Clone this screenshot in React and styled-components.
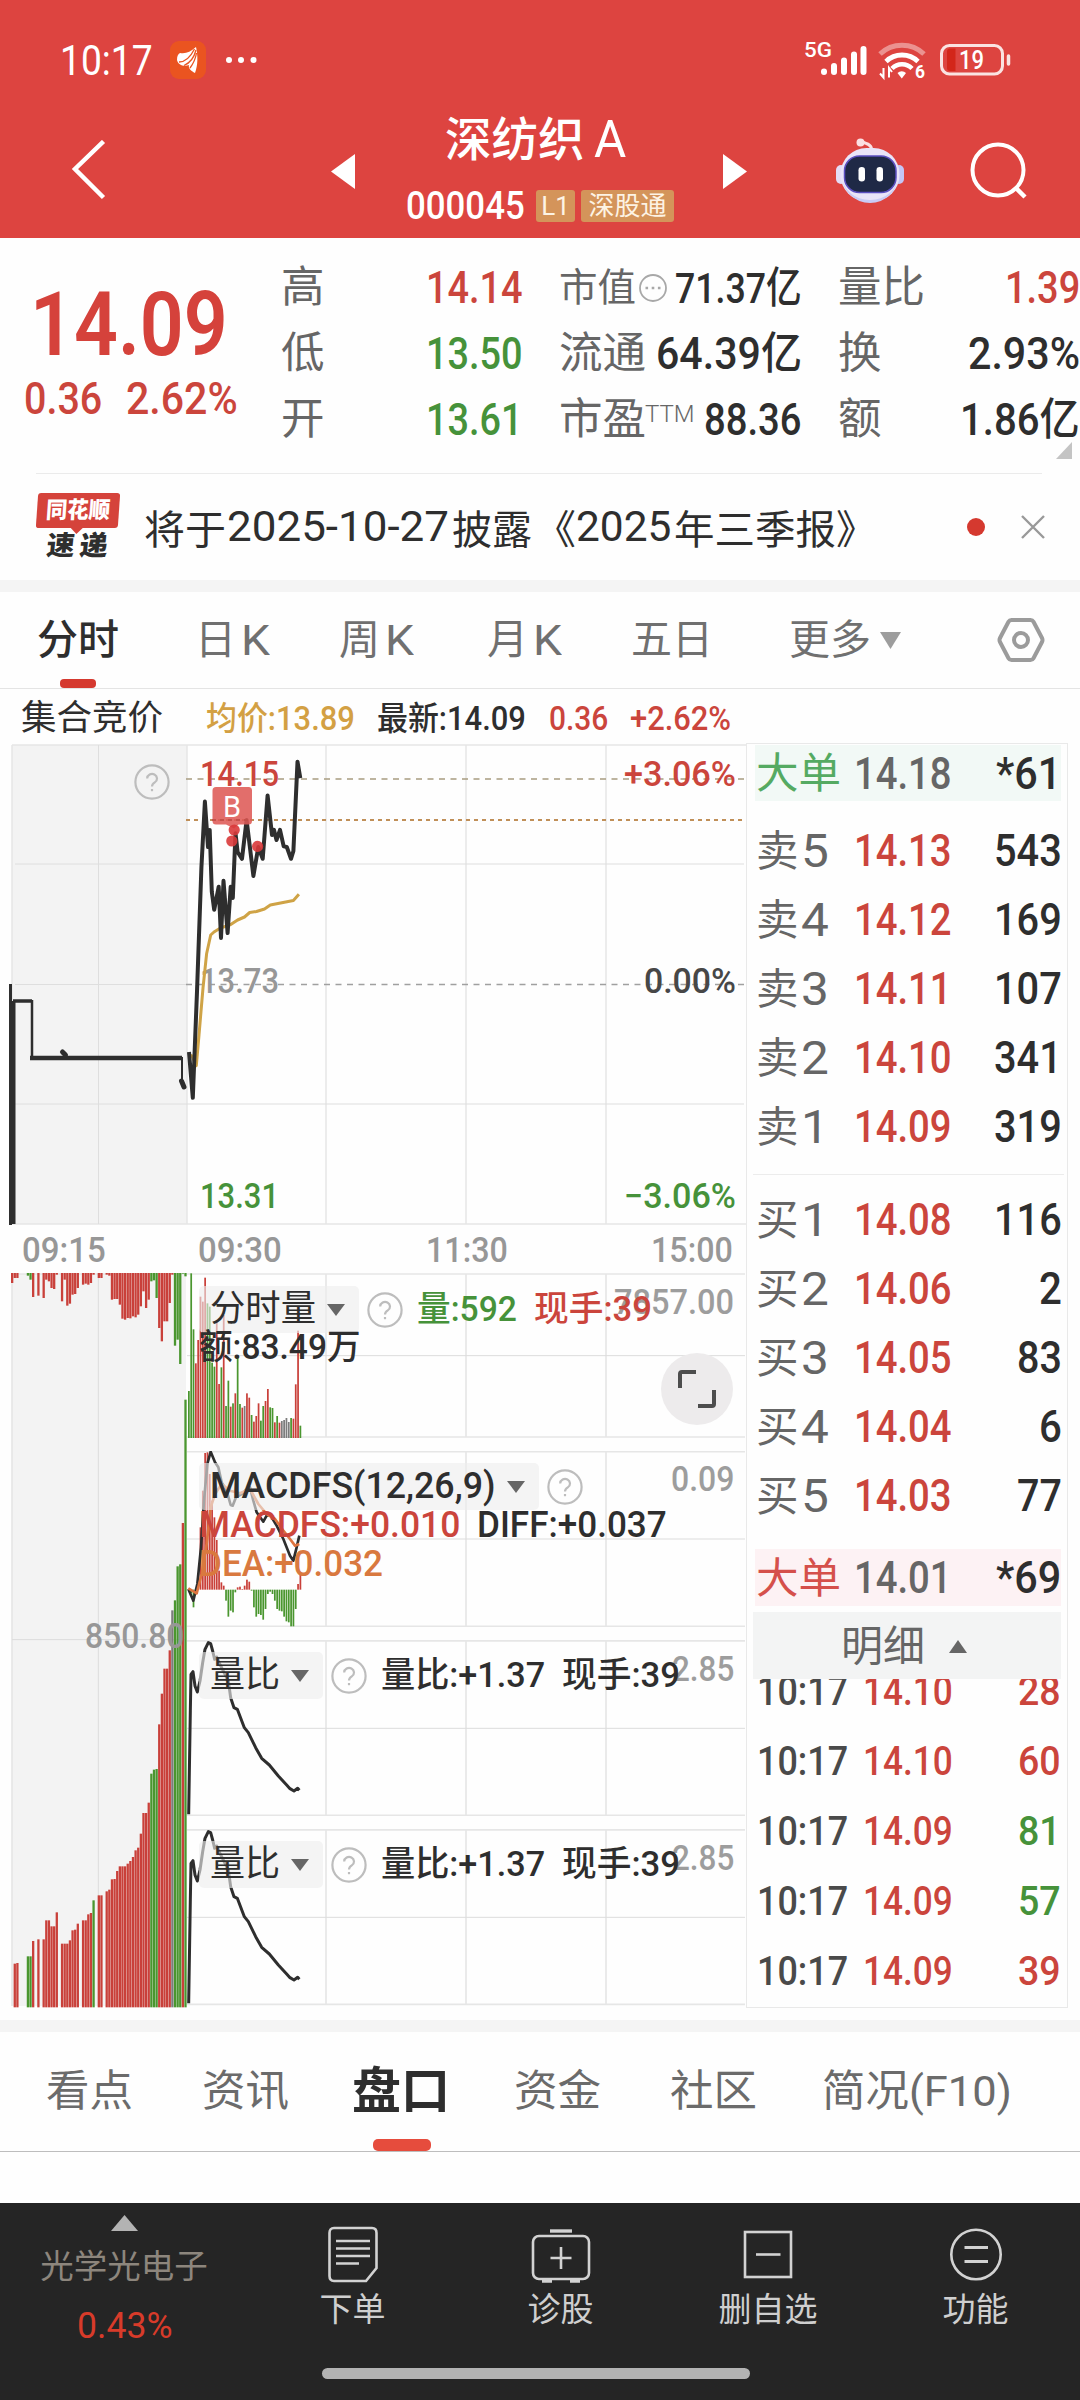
import React, { useLayoutEffect, useRef, useState } from 'react'
import styled, { createGlobalStyle } from 'styled-components'

const RED = '#cb453c'
const GREEN = '#46923a'
const INK = '#2e2e2e'
const GREY = '#666'
const LINE = '#e6e6e6'

const GlobalStyle = createGlobalStyle`
    body {
        margin: 0;
        background: #fefefe;
        font-family: Roboto, "Noto Sans CJK SC", sans-serif;
        color: ${INK};
    }
    * {
        box-sizing: border-box;
    }
    svg {
        display: block;
    }
`

const FitBox = styled.span`
    display: inline-block;
    flex: none;
    width: ${p => p.$w}px;
    font-size: ${p => p.$size}px;
    font-weight: ${p => p.$weight || 400};
    color: ${p => p.$color || 'inherit'};
    white-space: nowrap;
`
const FitInner = styled.span`
    display: inline-block;
    transform-origin: 0 50%;
`

// text squeezed horizontally to a fixed width, like the narrow DIN digits
const Fit = ({ w, size, weight, color, children }) => {
    const ref = useRef(null)
    const [k, setK] = useState(1)
    useLayoutEffect(() => {
        setK(w / ref.current.offsetWidth)
    }, [w, size, weight, children])
    return (
        <FitBox $w={w} $size={size} $weight={weight} $color={color}>
            <FitInner ref={ref} style={{ transform: `scaleX(${k})` }}>{children}</FitInner>
        </FitBox>
    )
}

const Page = styled.div`
    width: 1080px;
    height: 2400px;
    display: flex;
    flex-direction: column;
    overflow: hidden;
`

/* ---------- header ---------- */
const Header = styled.header`
    height: 238px;
    background: #dd4440;
    color: #fff;
    flex: none;
`
const StatusBar = styled.div`
    height: 104px;
    padding: 16px 69px 0 60px;
    display: flex;
    align-items: center;
`
const StatusIcons = styled.div`
    margin-left: auto;
    display: flex;
    align-items: center;
`
const NoticeIcon = styled.div`
    margin: 0 18px 0 17px;
`
const TitleBar = styled.div`
    height: 134px;
    display: flex;
    align-items: center;
`
const IconSlot = styled.div`
    margin-left: ${p => p.$gap}px;
    flex: none;
`
const TitleBlock = styled.div`
    width: 268px;
    height: 134px;
    margin-left: 51px;
    padding-top: 7px;
`
const StockName = styled.div`
    height: 58px;
    line-height: 58px;
    font-size: 46.5px;
    font-weight: 500;
    margin: 0 0 18px 39px;
    display: flex;
    gap: 9px;
`
const CodeRow = styled.div`
    height: 38px;
    line-height: 38px;
    display: flex;
    align-items: center;
`
const Badge = styled.span`
    height: 32px;
    line-height: 33px;
    width: ${p => p.$w}px;
    margin-left: ${p => p.$gap}px;
    border-radius: 3px;
    background: #d4945a;
    color: #fdf3e4;
    font-size: 26px;
    text-align: center;
`

/* ---------- quote ---------- */
const Quote = styled.section`
    position: relative;
    height: 235px;
    padding-top: 17px;
    display: grid;
    grid-template-columns: 281px 240px 240px 241px;
    column-gap: 0;
    flex: none;
`
const PriceCol = styled.div`
    padding: 20px 0 0 24px;
`
const BigPrice = styled.div`
    height: 100px;
    line-height: 100px;
    padding-left: 6px;
`
const Change = styled.div`
    height: 48px;
    line-height: 48px;
    display: flex;
    gap: 24px;
`
const StatCol = styled.div`
    margin-left: ${p => p.$gap || 0}px;
    width: ${p => p.$w}px;
`
const StatRow = styled.div`
    height: 66px;
    line-height: 66px;
    display: flex;
    justify-content: space-between;
    align-items: center;
    white-space: nowrap;
`
const StatLabel = styled.span`
    font-size: ${p => p.$size || 43}px;
    color: ${GREY};
    display: flex;
    align-items: center;
    gap: 2px;
`
const Sup = styled.span`
    font-size: 24px;
    font-weight: 300;
    line-height: 30px;
    margin: -12px 0 0 -3px;
`
const Corner = styled.svg`
    position: absolute;
    left: 1056px;
    top: 204px;
`
const Divider = styled.div`
    height: 1px;
    margin: 0 38px 0 36px;
    background: #ebebeb;
    flex: none;
`

/* ---------- news ---------- */
const News = styled.section`
    height: 106px;
    display: flex;
    align-items: center;
    flex: none;
`
const NewsTag = styled.div`
    width: 82px;
    height: 68px;
    margin-left: 37px;
    font-weight: 900;
`
const TagTop = styled.div`
    position: relative;
    height: 35px;
    line-height: 36px;
    padding-left: 9px;
    color: #fff;
    background: #d5433b;
    border-radius: 3px;
    transform: skewX(-4deg);
    &::after {
        content: '';
        position: absolute;
        left: 35px;
        top: 35px;
        border: 6px solid transparent;
        border-top-color: #d5433b;
        border-bottom-width: 0;
    }
`
const TagBottom = styled.div`
    height: 31px;
    line-height: 37px;
    padding-left: 10px;
    display: flex;
    gap: 5px;
    transform: skewX(-6deg);
`
const NewsText = styled.div`
    width: 728px;
    margin-left: 25px;
    padding-bottom: 1px;
    display: flex;
    align-items: center;
    font-size: 40px;
    white-space: nowrap;
`
const Dot = styled.div`
    width: 18px;
    height: 18px;
    margin: 0 35px 0 95px;
    border-radius: 50%;
    background: #d5392f;
`
const Band = styled.div`
    height: 12px;
    background: #f4f4f4;
    flex: none;
`

/* ---------- tabs ---------- */
const PeriodTabs = styled.nav`
    height: 97px;
    padding-left: 37px;
    display: grid;
    grid-template-columns: 158px 144px 148px 144px 158px 208px 46px;
    align-items: center;
    border-bottom: 1px solid #e4e4e4;
    flex: none;
`
const PeriodTab = styled.div`
    position: relative;
    height: 96px;
    line-height: 96px;
    font-size: 41px;
    color: ${p => (p.$active ? INK : '#707070')};
    font-weight: ${p => (p.$active ? 500 : 400)};
    display: flex;
    align-items: center;
    gap: ${p => p.$gap || 5}px;
    &::after {
        content: '';
        display: ${p => (p.$active ? 'block' : 'none')};
        position: absolute;
        left: 23px;
        bottom: 0;
        width: 36px;
        height: 9px;
        border-radius: 4px;
        background: #d5392f;
    }
`

/* ---------- charts ---------- */
const Main = styled.section`
    height: 1319px;
    margin-bottom: 12px;
    display: flex;
    flex: none;
`
const ChartSide = styled.div`
    width: 746px;
`
const InfoRow = styled.div`
    height: 54px;
    line-height: 59px;
    padding-left: 21px;
    display: flex;
    white-space: nowrap;
`
const InfoItem = styled.div`
    margin-right: ${p => p.$gap}px;
`
const TimeAxis = styled.div`
    height: 46px;
    line-height: 46px;
    padding: 1px 0 0 22px;
    display: grid;
    grid-template-columns: 176px 228px 225px 82px;
    color: #979797;
`
const Lower = styled.div`
    height: 735px;
    padding-left: 11px;
    display: flex;
`
const PlotStack = styled.div`
    width: 559px;
    display: flex;
    flex-direction: column;
    gap: 13px;
`
const Plot = styled.div`
    position: relative;
    height: ${p => p.$h}px;
`
const Legend = styled.div`
    position: absolute;
    left: 12px;
    top: 12px;
    right: 13px;
`
const LegendRow = styled.div`
    height: ${p => p.$h}px;
    line-height: ${p => p.$h}px;
    margin-top: ${p => p.$top || 0}px;
    display: flex;
    align-items: center;
    white-space: nowrap;
`
const Picker = styled.div`
    height: 47px;
    line-height: 47px;
    width: ${p => p.$w}px;
    padding: 0 14px 0 11px;
    display: flex;
    align-items: center;
    justify-content: space-between;
    background: rgba(238, 238, 238, 0.62);
    border-radius: 5px;
    margin-right: 8px;
    flex: none;
`
const Gap = styled.div`
    width: ${p => p.$w}px;
    flex: none;
`
const ScaleMax = styled.div`
    position: absolute;
    right: 12px;
    top: ${p => p.$top}px;
    height: 40px;
    line-height: 40px;
    z-index: -1;
`
const ExpandButton = styled.div`
    position: absolute;
    left: 474px;
    top: 80px;
    width: 72px;
    height: 72px;
    border-radius: 50%;
    background: #edebec;
    display: flex;
    align-items: center;
    justify-content: center;
`

/* ---------- order book ---------- */
const Book = styled.aside`
    width: 322px;
    margin-top: 54px;
    height: 1265px;
    border: 1px solid #e9e9e9;
    padding-top: 1px;
    overflow: hidden;
`
const BookRow = styled.div`
    height: ${p => p.$h || 69}px;
    line-height: ${p => p.$h || 69}px;
    display: grid;
    grid-template-columns: 98px 98px 1fr;
    align-items: center;
    padding: 3px 5px 0 9px;
    white-space: nowrap;
`
const BigOrder = styled(BookRow)`
    margin: ${p => p.$top}px 6px 0 8px;
    padding: 1px 0 0 1px;
    background: ${p => p.$bg};
`
const Side = styled.div`
    font-size: 42.5px;
    color: ${p => p.$color || GREY};
    display: flex;
    align-items: center;
    gap: 2px;
`
const Right = styled.div`
    display: flex;
    justify-content: flex-end;
`
const Rows = styled.div`
    padding-top: ${p => p.$top}px;
`
const BookDivider = styled.div`
    height: 1px;
    margin: 15px 3px 0 6px;
    background: #ececec;
`
const DetailHead = styled.div`
    height: 67px;
    margin: 6px 6px 0 6px;
    background: #f3f4f4;
    color: ${GREY};
    font-size: 42px;
    line-height: 69px;
    display: flex;
    align-items: center;
    gap: 24px;
    padding: 1px 0 0 88px;
`
const Trades = styled.div`
    height: 326px;
    overflow: hidden;
`
const TradeRow = styled.div`
    height: 70px;
    line-height: 70px;
    display: grid;
    grid-template-columns: 106px 98px 1fr;
    padding: 0 6px 0 10px;
    &:first-child {
        margin-top: -23px;
    }
`

/* ---------- bottom ---------- */
const SectionTabs = styled.nav`
    height: 120px;
    padding-left: 46px;
    display: grid;
    grid-template-columns: 156px 150px 162px 156px 152px 190px;
    border-bottom: 1px solid #bdbdbd;
    flex: none;
`
const SectionTab = styled.div`
    position: relative;
    line-height: 119px;
    font-size: ${p => (p.$active ? 49 : 43.5)}px;
    font-weight: ${p => (p.$active ? 700 : 400)};
    color: ${p => (p.$active ? INK : '#6b6b6b')};
    white-space: nowrap;
    &::after {
        content: '';
        display: ${p => (p.$active ? 'block' : 'none')};
        position: absolute;
        left: 21px;
        bottom: 0;
        width: 58px;
        height: 12px;
        border-radius: 5px;
        background: #e64c3d;
    }
`
const BottomNav = styled.footer`
    height: 197px;
    margin-top: auto;
    background: #252525;
    color: #cfcfcf;
    flex: none;
`
const NavGrid = styled.div`
    height: 165px;
    display: grid;
    grid-template-columns: 248px 209px 207px 208px 207px;
`
const NavItem = styled.div`
    padding-top: 23px;
    display: flex;
    flex-direction: column;
    align-items: center;
`
const NavLabel = styled.div`
    font-size: 33px;
    line-height: 44px;
    margin-top: 5px;
`
const Sector = styled.div`
    padding-top: 12px;
    display: flex;
    flex-direction: column;
    align-items: center;
`
const SectorName = styled.div`
    font-size: 33.5px;
    line-height: 44px;
    margin-top: 14px;
    color: #8d867d;
`
const SectorChange = styled.div`
    line-height: 40px;
    margin: 17px 0 0 2px;
`
const HomeBar = styled.div`
    width: 428px;
    height: 11px;
    margin-left: 322px;
    border-radius: 6px;
    background: #b3b3b3;
`

/* ---------- small drawings ---------- */
const Triangle = ({ w, h, up, color = '#666' }) => (
    <svg width={w} height={h} viewBox="0 0 10 10" preserveAspectRatio="none">
        <path d={up ? 'M0 10L5 0L10 10Z' : 'M0 0L10 0L5 10Z'} fill={color} />
    </svg>
)

const Help = () => (
    <svg width="36" height="36" viewBox="0 0 36 36" fill="none" stroke="#bdbdbd" strokeWidth="2.2">
        <circle cx="18" cy="18" r="16.6" />
        <path d="M13.2 14.5a4.9 4.6 0 1 1 7.6 3.9c-1.9 1.2-2.8 2-2.8 4.2" />
        <path d="M18 25v2.2" />
    </svg>
)

const StatusGlyphs = () => (
    <svg width="208" height="42" viewBox="0 -1 208 42" fill="none">
        <g stroke="#fff" strokeWidth="6" strokeLinecap="round">
            <path d="M21 31.500v0.500M31 26v6M41 20.500v11.500M51 14.500v17.500M60.500 9v23" />
        </g>
        <path d="M77 14a32 32 0 0 1 44 0" stroke="#fff" strokeOpacity="0.42" strokeWidth="5" />
        <path d="M83 21.500a23 23 0 0 1 32 0" stroke="#fff" strokeWidth="4.800" />
        <path d="M89 28.500a14 14 0 0 1 20 0" stroke="#fff" strokeWidth="4.600" />
        <path d="M94.500 33a6 6 0 0 1 8.500 0l-4.200 5.500z" fill="#fff" />
        <path d="M80.500 28v9.500l-3.500-4M86 37.500v-9.500l3 4" stroke="#fff" strokeWidth="2" />
        <rect x="138.500" y="5.500" width="61" height="28.500" rx="8" stroke="#fff" strokeOpacity="0.85" strokeWidth="3" />
        <path d="M147 8.500h5.500v22.500h-5.500q-3 0-3-3v-16.500q0-3 3-3z" fill="#d3261a" />
        <path d="M205.500 16v8" stroke="#fff" strokeOpacity="0.85" strokeWidth="3.500" strokeLinecap="round" />
        <text x="1" y="17" fontSize="19.500" fontWeight="500" fill="#fff" textLength="28" lengthAdjust="spacingAndGlyphs">5G</text>
        <text x="112" y="38" fontSize="18" fontWeight="700" fill="#fff" textLength="10" lengthAdjust="spacingAndGlyphs">6</text>
        <text x="156" y="29" fontSize="26" fontWeight="500" fill="#fff" textLength="25" lengthAdjust="spacingAndGlyphs">19</text>
    </svg>
)

const Robot = () => (
    <svg width="68" height="66" viewBox="0 0 68 66">
        <path d="M35.500 12C36 7 31 5 25 4" fill="none" stroke="#fbdfe2" strokeWidth="3" />
        <circle cx="24.500" cy="4.500" r="4" fill="#fbdfe2" />
        <rect x="0" y="27" width="10" height="19" rx="5" fill="#e3dcf6" />
        <rect x="58" y="27" width="10" height="19" rx="5" fill="#c4c6f6" />
        <rect x="4.500" y="10" width="59" height="53" rx="26" fill="#e9e4f8" />
        <path d="M6 38a28 24 0 0 0 56 0a28 27 0 0 1-56 0z" fill="#c9cbf5" />
        <rect x="8.500" y="18" width="51.500" height="36.500" rx="15" fill="#1f2946" stroke="#5b4fc0" strokeWidth="1.500" />
        <rect x="22.500" y="29" width="6.500" height="14.500" rx="3.200" fill="#fff" />
        <rect x="40.500" y="29" width="6.500" height="14.500" rx="3.200" fill="#fff" />
    </svg>
)

/* ---------- chart data ---------- */
const pricePath = '189,312 192.8,357.8 197,251.7 201.4,127.7 204.9,61.6 208,107 209.7,89.9 211.8,151.8 214.2,169.8 218.7,146.7 221,198 223.5,140.8 227.6,193 230.7,146.7 232.8,158 235.5,93.3 237.6,112 242,118.8 246.6,80 253.4,136 258.3,107 262.7,118.8 267.6,55.4 272,95 274,89.9 276.5,100 280,89.9 283.7,106.4 286.8,107 291,118.8 293.4,111 297.5,21.7 300.3,38.2'
const avgPath = '189,315 192,316 196.3,325.7 199,295 203,248 206.6,213.8 210.7,195 214,192 220.4,188 230.7,184.6 237.6,180 244.5,177 249.7,172.5 256.5,171.5 264.5,169 270.3,165 293.4,160.5 298.9,154.3'

// auction bars: unmatched volume from the top, matched volume from the bottom
const auctionTop = 'r30 r15 r15 - - - g8 g20 r72 - r68 - r75 r20 r25 r45 r48 r5 - r85 r20 r98 r92 r65 r63 r45 - r35 r32 r35 r30 r5 - r15 r15 - r5 r8 r80 r78 r78 r95 r137 r140 r135 r136 r130 r133 r125 r100 r55 r105 r80 g25 g22 g75 r165 r205 r145 r145 r90 r5 g218 g200 g273 g2 g10'
const auctionBottom = '- r131 r133 - - - g153 g153 r199 - r204 - r204 r261 r261 r243 r243 r285 - r191 r191 r191 r201 r231 r233 r251 - r261 r261 r279 r283 g321 - r336 r336 - r348 r353 r384 r385 r409 r423 r423 r423 r431 r439 r451 r471 r479 r521 r583 r583 r614 g701 g713 g715 r849 r941 r1016 r1016 r1071 k1191 g1221 g1323 g1329 r1453 g1823'
const volume = 'g393 g40 g208 r310 r240 r110 r125 r53 g130 g140 g308 g320 r180 r372 g322 r165 g438 g362 r440 g430 r400 g290 g432 r443 k438 r400 r413 g465 r485 r468 r430 g482 g438 r423 r387 g442 g444 r487 g468 r488 k483 k480 k474 k486 g474 r476 r373 r212 g497'
const macd = 'g990 g998 g1040 g990 r940 r800 r690 r577 r575 r640 r720 r770 r838 r930 r965 r975 g1020 g1068 g1050 g1055 g995 r980 r978 r985 r975 r957 r963 g990 g1040 g1068 g1060 g1063 g1077 g1045 g1000 g993 g1000 g1020 g1045 g1050 g1052 g1068 g1082 g1085 g1097 g1097 g1045 r970 r942'
const diffPath = '565,985 580,1020 592,970 603,860 612,720 622,610 632,573 645,605 655,620 665,665 680,690 692,733 698,735 708,710 725,700 735,690 750,680 760,720 770,755 790,783 800,765 810,762 830,795 850,835 870,885 880,900 890,860 898,825'
const deaPath = '565,983 590,998 605,940 620,850 632,740 645,700 665,670 690,690 720,698 750,685 775,730 800,760 825,775 850,810 870,835 885,855 898,850'
const ratioPath = '566,550 571,240 573,130 579,122 585,165 592,183 600,150 608,95 615,55 625,35 632,38 638,60 644,85 650,78 660,100 675,130 685,150 692,200 702,230 712,235 733,290 745,305 767,350 785,382 808,402 835,435 860,462 870,473 882,480 893,472 898,478'

const barColor = { r: '#c9403a', g: '#4a962f', k: '#7c7c7c' }
const parseBars = str =>
    str.split(' ').map((s, i) => ({ i, color: barColor[s[0]], v: Number(s.slice(1)) })).filter(b => b.color)

const Bars = ({ data, x0, step, width, base, relative }) => (
    <g>
        {parseBars(data).map(({ i, color, v }) => {
            const y = relative ? base + relative * v : v
            return (
                <rect key={i} x={x0 + i * step} width={width} y={Math.min(base, y)} height={Math.abs(base - y)} fill={color} />
            )
        })}
    </g>
)

const AxisText = ({ x, y, w, fill, children }) => (
    <text x={x} y={y} fontSize="35" fontWeight="500" fill={fill} textLength={w} lengthAdjust="spacingAndGlyphs">{children}</text>
)

const PriceChart = () => (
    <svg width="746" height="484" viewBox="0 3 746 484" fill="none">
        <rect x="12" y="5" width="175" height="479" fill="#f3f3f3" />
        <g stroke={LINE} strokeWidth="1.5">
            <path d="M12 5H746M12 484H746M12 5V484M187 5V484M326 5V484M466 5V484M606 5V484" />
            <path d="M15 124H744M15 364H744M15 244.500H187M98.500 5V484" strokeWidth="1" stroke="#dedede" />
        </g>
        <path d="M186 39H745" stroke="#a89c80" strokeWidth="1.600" strokeDasharray="6 5.500" />
        <path d="M186 80H745" stroke="#c08f58" strokeWidth="2" strokeDasharray="4 4" />
        <path d="M186 244.500H745" stroke="#a0a0a0" strokeWidth="1.600" strokeDasharray="6 5.500" />
        <path d="M10.500 244V485" stroke={INK} strokeWidth="3" />
        <path d="M13.500 261V484" stroke={INK} strokeWidth="4" />
        <path d="M13 261H32" stroke={INK} strokeWidth="3.500" />
        <path d="M32 260V318" stroke={INK} strokeWidth="2.500" />
        <path d="M30 318H182" stroke={INK} strokeWidth="4.500" />
        <path d="M182 317V341" stroke={INK} strokeWidth="2" />
        <path d="M181.500 341L184 347M62.500 312L65.500 315" stroke={INK} strokeWidth="5" strokeLinecap="round" />
        <g transform="translate(134 24)"><Help /></g>
        <AxisText x="200" y="46" w="79" fill={RED}>14.15</AxisText>
        <AxisText x="624" y="46" w="112" fill={RED}>+3.06%</AxisText>
        <AxisText x="200" y="253" w="79" fill="#979797">13.73</AxisText>
        <AxisText x="644" y="253" w="92" fill="#474747">0.00%</AxisText>
        <AxisText x="200" y="468" w="79" fill={GREEN}>13.31</AxisText>
        <AxisText x="624" y="468" w="112" fill={GREEN}>−3.06%</AxisText>
        <polyline points={avgPath} stroke="#cfa346" strokeWidth="3" strokeLinejoin="round" />
        <polyline points={pricePath} stroke={INK} strokeWidth="4" strokeLinejoin="round" />
        <path d="M216 47h32.500q3.500 0 3.500 3.500v30.500q0 3.500-3.500 3.500h-10l-4.500 4-8-4h-10q-3.500 0-3.500-3.500v-30.500q0-3.500 3.500-3.500z" fill="#de5a56" fillOpacity="0.88" />
        <path d="M212 80H252" stroke="#c4504a" strokeWidth="2" strokeDasharray="4 4" />
        <text x="223" y="76.500" fontSize="29" fill="#fff">B</text>
        <g fill="#d9393a" fillOpacity="0.9">
            <circle cx="234.200" cy="90" r="5.600" />
            <circle cx="231.800" cy="101" r="5.600" />
            <circle cx="257.600" cy="106.400" r="5.600" />
        </g>
    </svg>
)

const AuctionChart = () => (
    <svg width="176" height="735" viewBox="33 39 528 2205" fill="none">
        <rect x="36" y="42" width="522" height="2196" fill="#f3f3f3" />
        <path d="M36 42V2238M33 42H558" stroke={LINE} strokeWidth="5" />
        <path d="M295 42V2238M36 1139H558" stroke="#dcdcdc" strokeWidth="3" />
        <Bars data={auctionTop} x0={33} step={7.88} width={6.9} base={39} relative={1} />
        <Bars data={auctionBottom} x0={33} step={7.88} width={6.9} base={2242} relative={-1} />
        <text x="255" y="1164" fontSize="105" fontWeight="500" fill="#979797" textLength="298" lengthAdjust="spacingAndGlyphs">850.80</text>
    </svg>
)

// plots are drawn at three units per pixel
const PlotGrid = ({ top, mid, bottom }) => (
    <g stroke={LINE} strokeWidth="5">
        <path d={`M558 ${top}H2235M558 ${bottom}H2235M978 ${top}V${bottom}M1398 ${top}V${bottom}M1818 ${top}V${bottom}`} />
        <path d={`M558 ${mid}H2235`} strokeWidth="3" stroke="#dcdcdc" />
    </g>
)

const RatioPlot = ({ h }) => (
    <Plot $h={h}>
        <svg width="559" height={h} viewBox={`561 27 1677 ${h * 3}`} fill="none">
            <PlotGrid top={29.5} mid={292} bottom={553} />
            <polyline points={ratioPath} stroke={INK} strokeWidth="9" strokeLinejoin="round" />
        </svg>
        <ScaleMax $top={10}><Fit w={62} size={35} weight={500} color="#9d9d9d">2.85</Fit></ScaleMax>
        <Legend>
            <LegendRow $h={47}>
                <Picker $w={124}><Fit w={70} size={36}>量比</Fit><Triangle w={18} h={12} /></Picker>
                <Help />
                <Gap $w={14} />
                <Fit w={164} size={35} weight={500}>量比:+1.37</Fit>
                <Gap $w={17} />
                <Fit w={118} size={35} weight={500}>现手:39</Fit>
            </LegendRow>
        </Legend>
    </Plot>
)

const stats = [
    { gap: 0, w: 242, rows: [['高', '14.14', RED, 97], ['低', '13.50', GREEN, 97], ['开', '13.61', GREEN, 97]] },
    { gap: 38, w: 243, rows: [['市值', '71.37亿', INK, 127], ['流通', '64.39亿', INK, 146], ['市盈', '88.36', INK, 98]] },
    { gap: 77, w: 242, rows: [['量比', '1.39', RED, 75], ['换', '2.93%', INK, 112], ['额', '1.86亿', INK, 120]] },
]
const sells = [['5', '14.13', '543'], ['4', '14.12', '169'], ['3', '14.11', '107'], ['2', '14.10', '341'], ['1', '14.09', '319']]
const buys = [['1', '14.08', '116'], ['2', '14.06', '2'], ['3', '14.05', '83'], ['4', '14.04', '6'], ['5', '14.03', '77']]
const trades = [['14.10', '28', RED], ['14.10', '60', RED], ['14.09', '81', GREEN], ['14.09', '57', GREEN], ['14.09', '39', RED]]

const Level = ({ side, row }) => (
    <BookRow>
        <Side>{side}<Fit w={28} size={46} color={GREY}>{row[0]}</Fit></Side>
        <Fit w={98} size={44.5} weight={500} color={RED}>{row[1]}</Fit>
        <Right><Fit w={row[2].length * 22.6} size={44.5} weight={500}>{row[2]}</Fit></Right>
    </BookRow>
)

const navIcons = {
    order: (
        <svg width="52" height="57" viewBox="0 0 52 57" fill="none" stroke="#d2d2d2" strokeWidth="2.6">
            <path d="M7 2H45q4.500 0 4.500 5V42L39 55H7q-4.500 0-4.500-5V7q0-5 4.500-5zM9 15H43M9 22.500H43M9 30H43M9 37.500H32" />
        </svg>
    ),
    diagnose: (
        <svg width="60" height="57" viewBox="0 0 60 57" fill="none" stroke="#d2d2d2" strokeWidth="2.6">
            <rect x="2" y="10" width="56" height="43" rx="6" />
            <path d="M19 5H41" strokeWidth="3.400" />
            <path d="M30 21V43M19.500 32H40.500" />
            <path d="M11 55H21M39 55H49" strokeWidth="3.600" />
        </svg>
    ),
    remove: (
        <svg width="50" height="57" viewBox="0 0 50 57" fill="none" stroke="#d2d2d2" strokeWidth="2.6">
            <rect x="2" y="6" width="46" height="45" />
            <path d="M13 28.500H37.500" />
        </svg>
    ),
    more: (
        <svg width="54" height="57" viewBox="0 0 54 57" fill="none" stroke="#d2d2d2" strokeWidth="2.6">
            <circle cx="27" cy="28.500" r="24.700" />
            <path d="M15.500 21.500H39M15.500 35.500H39" strokeWidth="3" />
        </svg>
    ),
}

const App = () => {
    return (
        <>
        <GlobalStyle />
        <Page>
            <Header>
                <StatusBar>
                    <Fit w={93} size={42}>10:17</Fit>
                    <NoticeIcon>
                        <svg width="36" height="38" viewBox="0 0 36 38">
                            <rect width="36" height="38" rx="9" fill="#ea5420" />
                            <path d="M7 19C7 15 8 13 10 12C16 13 20 11 26 6C28 15 28 24 25 32C21 30 18 27 19 24C14 26 8 24 7 19z" fill="#fff" />
                            <path d="M9 21C16 21 21 15 24.500 8M14 24.500C20 22 24 17 26 9M20 27C23 23 25.500 18 26.500 12" stroke="#ea5420" strokeWidth="1.300" fill="none" />
                        </svg>
                    </NoticeIcon>
                    <svg width="34" height="8" viewBox="0 0 34 8" fill="#fff">
                        <circle cx="5" cy="4" r="3" />
                        <circle cx="17" cy="4" r="3" />
                        <circle cx="29.500" cy="4" r="3" />
                    </svg>
                    <StatusIcons><StatusGlyphs /></StatusIcons>
                </StatusBar>
                <TitleBar>
                    <IconSlot $gap={71}>
                        <svg width="37" height="62" viewBox="0 0 37 62" fill="none" stroke="#fff" strokeWidth="4.500">
                            <path d="M32.500 1.500L4 29L32.500 57.500" />
                        </svg>
                    </IconSlot>
                    <IconSlot $gap={223}>
                        <svg width="24" height="35" viewBox="0 0 24 35"><path d="M24 0V35L0 17.500z" fill="#fff" /></svg>
                    </IconSlot>
                    <TitleBlock>
                        <StockName>深纺织<Fit w={32} size={51}>A</Fit></StockName>
                        <CodeRow>
                            <Fit w={119} size={39.5} weight={500}>000045</Fit>
                            <Badge $w={39} $gap={11}>L1</Badge>
                            <Badge $w={93} $gap={6}>深股通</Badge>
                        </CodeRow>
                    </TitleBlock>
                    <IconSlot $gap={49}>
                        <svg width="24" height="35" viewBox="0 0 24 35"><path d="M0 0V35L24 17.500z" fill="#fff" /></svg>
                    </IconSlot>
                    <IconSlot $gap={89}><Robot /></IconSlot>
                    <IconSlot $gap={66}>
                        <svg width="58" height="58" viewBox="0 0 58 58" fill="none" stroke="#fff" strokeWidth="4">
                            <circle cx="28" cy="28" r="25.500" />
                            <path d="M45.500 45.500L55 55" strokeWidth="4.500" />
                        </svg>
                    </IconSlot>
                </TitleBar>
            </Header>

            <Quote>
                <PriceCol>
                    <BigPrice><Fit w={198} size={89} weight={600} color="#d5423b">14.09</Fit></BigPrice>
                    <Change>
                        <Fit w={78} size={44} weight={500} color={RED}>0.36</Fit>
                        <Fit w={112} size={44} weight={500} color={RED}>2.62%</Fit>
                    </Change>
                </PriceCol>
                {stats.map(col => (
                    <StatCol key={col.gap} $gap={col.gap} $w={col.w}>
                        {col.rows.map(([label, value, color, w]) => (
                            <StatRow key={label}>
                                <StatLabel $size={label === '市值' ? 38.5 : 43.5}>
                                    {label}
                                    {label === '市值' && (
                                        <svg width="30" height="30" viewBox="0 0 30 30" fill="none" stroke="#a8a8a8" strokeWidth="1.800">
                                            <circle cx="15" cy="15" r="13" />
                                            <path d="M7.500 15h2.600M13.700 15h2.600M19.900 15h2.600" strokeWidth="2.600" />
                                        </svg>
                                    )}
                                    {label === '市盈' && <Sup>TTM</Sup>}
                                </StatLabel>
                                <Fit w={w} size={label === '市值' ? 43 : 44.5} weight={500} color={color}>{value}</Fit>
                            </StatRow>
                        ))}
                    </StatCol>
                ))}
                <Corner width="16" height="17" viewBox="0 0 16 17"><path d="M16 0V17H0z" fill="#c4c4c4" /></Corner>
            </Quote>
            <Divider />

            <News>
                <NewsTag>
                    <TagTop><Fit w={64} size={23} weight={900}>同花顺</Fit></TagTop>
                    <TagBottom>
                        <Fit w={28} size={27} weight={900}>速</Fit>
                        <Fit w={28} size={27} weight={900}>递</Fit>
                    </TagBottom>
                </NewsTag>
                <NewsText>
                    <Fit w={82} size={40}>将于</Fit><Gap $w={1} />
                    <Fit w={222} size={42}>2025-10-27</Fit>
                    <Gap $w={3} />
                    <Fit w={80} size={40}>披露</Fit>
                    <Gap $w={2} />
                    <Fit w={42} size={40}>《</Fit>
                    <Fit w={95} size={42}>2025</Fit>
                    <Gap $w={3} />
                    <Fit w={162} size={40}>年三季报</Fit>
                    <Fit w={40} size={40}>》</Fit>
                </NewsText>
                <Dot />
                <svg width="26" height="26" viewBox="0 0 26 26" stroke="#999" strokeWidth="2.400">
                    <path d="M2 2L24 24M24 2L2 24" />
                </svg>
            </News>
            <Band />

            <PeriodTabs>
                <PeriodTab $active>分时</PeriodTab>
                <PeriodTab>日<Fit w={29} size={43}>K</Fit></PeriodTab>
                <PeriodTab>周<Fit w={29} size={43}>K</Fit></PeriodTab>
                <PeriodTab>月<Fit w={29} size={43}>K</Fit></PeriodTab>
                <PeriodTab>五日</PeriodTab>
                <PeriodTab $gap={9}>更多<Triangle w={21} h={17} color="#9d9d9d" /></PeriodTab>
                <svg width="48" height="46" viewBox="0 0 48 46" fill="none" stroke="#9b9b9b" strokeWidth="4">
                    <path d="M14.500 3H33.500q2 0 3 1.800L45 21q1 2 0 4L36.500 41.200q-1 1.800-3 1.800H14.500q-2 0-3-1.800L3 25q-1-2 0-4L11.500 4.800q1-1.800 3-1.800z" />
                    <circle cx="24" cy="23" r="7" />
                </svg>
            </PeriodTabs>

            <Main>
                <ChartSide>
                    <InfoRow>
                        <InfoItem $gap={43}><Fit w={142} size={35}>集合竞价</Fit></InfoItem>
                        <InfoItem $gap={22}><Fit w={149} size={33} weight={500} color="#d3a043">均价:13.89</Fit></InfoItem>
                        <InfoItem $gap={23}><Fit w={149} size={33} weight={500}>最新:14.09</Fit></InfoItem>
                        <InfoItem $gap={22}><Fit w={59} size={33} weight={500} color={RED}>0.36</Fit></InfoItem>
                        <Fit w={101} size={33} weight={500} color={RED}>+2.62%</Fit>
                    </InfoRow>
                    <PriceChart />
                    <TimeAxis>
                        <Fit w={84} size={35} weight={500}>09:15</Fit>
                        <Fit w={84} size={35} weight={500}>09:30</Fit>
                        <Fit w={82} size={35} weight={500}>11:30</Fit>
                        <Fit w={82} size={35} weight={500}>15:00</Fit>
                    </TimeAxis>
                    <Lower>
                        <AuctionChart />
                        <PlotStack>
                            <Plot $h={165}>
                                <svg width="559" height="165" viewBox="561 39 1677 495" fill="none">
                                    <PlotGrid top={42} mid={287} bottom={531} />
                                    <Bars data={volume} x0={564} step={6.97} width={5.2} base={534} />
                                </svg>
                                <ScaleMax $top={10}><Fit w={120} size={35} weight={500} color="#9d9d9d">7857.00</Fit></ScaleMax>
                                <Legend>
                                    <LegendRow $h={47} $top={1}>
                                        <Picker $w={160}><Fit w={106} size={36}>分时量</Fit><Triangle w={18} h={12} /></Picker>
                                        <Help />
                                        <Gap $w={14} />
                                        <Fit w={100} size={35} weight={500} color={GREEN}>量:592</Fit>
                                        <Gap $w={17} />
                                        <Fit w={118} size={35} weight={500} color={RED}>现手:39</Fit>
                                    </LegendRow>
                                    <LegendRow $h={28} $top={1}>
                                        <Fit w={162} size={35} weight={500}>额:83.49万</Fit>
                                    </LegendRow>
                                </Legend>
                                <ExpandButton>
                                    <svg width="40" height="40" viewBox="0 0 40 40" fill="none" stroke="#4d4d4d" strokeWidth="4">
                                        <path d="M3 19V5q0-2 2-2H19M37 21V35q0 2-2 2H21" />
                                    </svg>
                                </ExpandButton>
                            </Plot>
                            <Plot $h={176}>
                                <svg width="559" height="176" viewBox="561 571 1677 528" fill="none">
                                    <PlotGrid top={573} mid={835} bottom={1097} />
                                    <Bars data={macd} x0={564} step={6.97} width={5.2} base={987} />
                                    <polyline points={diffPath} stroke={INK} strokeWidth="8" strokeLinejoin="round" />
                                    <polyline points={deaPath} stroke="#dd7440" strokeWidth="8" strokeLinejoin="round" />
                                </svg>
                                <ScaleMax $top={9}><Fit w={63} size={35} weight={500} color="#9d9d9d">0.09</Fit></ScaleMax>
                                <Legend>
                                    <LegendRow $h={47}>
                                        <Picker $w={340}><Fit w={286} size={36} weight={500}>MACDFS(12,26,9)</Fit><Triangle w={18} h={12} /></Picker>
                                        <Help />
                                    </LegendRow>
                                    <LegendRow $h={30}>
                                        <Fit w={261} size={36} weight={500} color={RED}>MACDFS:+0.010</Fit>
                                        <Gap $w={17} />
                                        <Fit w={190} size={36} weight={500}>DIFF:+0.037</Fit>
                                    </LegendRow>
                                    <LegendRow $h={48}>
                                        <Fit w={184} size={36} weight={500} color="#d9793f">DEA:+0.032</Fit>
                                    </LegendRow>
                                </Legend>
                            </Plot>
                            <RatioPlot h={176} />
                            <RatioPlot h={177} />
                        </PlotStack>
                    </Lower>
                </ChartSide>

                <Book>
                    <BigOrder $h={56} $top={0} $bg="#f2f9f6">
                        <Side $color="#55aa62">大单</Side>
                        <Fit w={98} size={44.5} weight={500} color={GREY}>14.18</Fit>
                        <Right><Fit w={65} size={44.5} weight={500}>*61</Fit></Right>
                    </BigOrder>
                    <Rows $top={13}>
                        {sells.map(row => <Level key={row[0]} side="卖" row={row} />)}
                    </Rows>
                    <BookDivider />
                    <Rows $top={8}>
                        {buys.map(row => <Level key={row[0]} side="买" row={row} />)}
                    </Rows>
                    <BigOrder $h={57} $top={21} $bg="#fdf2f4">
                        <Side $color="#d5504b">大单</Side>
                        <Fit w={98} size={44.5} weight={500} color={GREY}>14.01</Fit>
                        <Right><Fit w={65} size={44.5} weight={500}>*69</Fit></Right>
                    </BigOrder>
                    <DetailHead>明细<Triangle w={18} h={13} up /></DetailHead>
                    <Trades>
                        {trades.map(([price, vol, color], i) => (
                            <TradeRow key={i}>
                                <Fit w={91} size={41} weight={500} color="#4a4a4a">10:17</Fit>
                                <Fit w={90} size={41} weight={500} color={RED}>{price}</Fit>
                                <Right><Fit w={43} size={41} weight={500} color={color}>{vol}</Fit></Right>
                            </TradeRow>
                        ))}
                    </Trades>
                </Book>
            </Main>
            <Band />

            <SectionTabs>
                <SectionTab>看点</SectionTab>
                <SectionTab>资讯</SectionTab>
                <SectionTab $active>盘口</SectionTab>
                <SectionTab>资金</SectionTab>
                <SectionTab>社区</SectionTab>
                <SectionTab><Fit w={190} size={43}>简况(F10)</Fit></SectionTab>
            </SectionTabs>

            <BottomNav>
                <NavGrid>
                    <Sector>
                        <Triangle w={27} h={16} up color="#b3b3b3" />
                        <SectorName>光学光电子</SectorName>
                        <SectorChange><Fit w={96} size={36} color="#d83b2a">0.43%</Fit></SectorChange>
                    </Sector>
                    <NavItem>{navIcons.order}<NavLabel>下单</NavLabel></NavItem>
                    <NavItem>{navIcons.diagnose}<NavLabel>诊股</NavLabel></NavItem>
                    <NavItem>{navIcons.remove}<NavLabel>删自选</NavLabel></NavItem>
                    <NavItem>{navIcons.more}<NavLabel>功能</NavLabel></NavItem>
                </NavGrid>
                <HomeBar />
            </BottomNav>
        </Page>
        </>
    )
}

export default App
